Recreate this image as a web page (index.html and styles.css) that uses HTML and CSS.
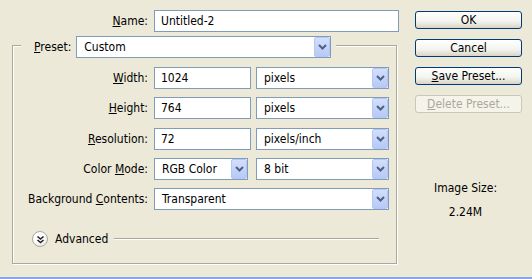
FILE: index.html
```html
<!DOCTYPE html>
<html lang="en">

<head>
    <title>New</title>
    <link rel="stylesheet" href="styles.css">
</head>

<body>
    <div class="dialog">
        <div class="form">
            <div class="row name-row">
                <label class="lbl"><u>N</u>ame:</label>
                <div class="field name-field">Untitled-2</div>
            </div>

            <fieldset class="group">
                <legend class="preset">
                    <label class="preset-lbl"><u>P</u>reset:</label>
                    <div class="combo preset-combo">
                        <span class="val">Custom</span>
                        <span class="arrow"><svg width="9" height="6" viewBox="0 0 9 6"><path d="M1 1 L4.5 4.5 L8 1" fill="none" stroke="#4d6185" stroke-width="2"/></svg></span>
                    </div>
                </legend>

                <div class="rows">
                    <div class="row">
                        <label class="lbl"><u>W</u>idth:</label>
                        <div class="field num">1024</div>
                        <div class="combo unit">
                            <span class="val">pixels</span>
                            <span class="arrow"><svg width="9" height="6" viewBox="0 0 9 6"><path d="M1 1 L4.5 4.5 L8 1" fill="none" stroke="#4d6185" stroke-width="2"/></svg></span>
                        </div>
                    </div>
                    <div class="row">
                        <label class="lbl"><u>H</u>eight:</label>
                        <div class="field num">764</div>
                        <div class="combo unit">
                            <span class="val">pixels</span>
                            <span class="arrow"><svg width="9" height="6" viewBox="0 0 9 6"><path d="M1 1 L4.5 4.5 L8 1" fill="none" stroke="#4d6185" stroke-width="2"/></svg></span>
                        </div>
                    </div>
                    <div class="row">
                        <label class="lbl"><u>R</u>esolution:</label>
                        <div class="field num">72</div>
                        <div class="combo unit">
                            <span class="val">pixels/inch</span>
                            <span class="arrow"><svg width="9" height="6" viewBox="0 0 9 6"><path d="M1 1 L4.5 4.5 L8 1" fill="none" stroke="#4d6185" stroke-width="2"/></svg></span>
                        </div>
                    </div>
                    <div class="row">
                        <label class="lbl">Color <u>M</u>ode:</label>
                        <div class="combo mode">
                            <span class="val">RGB Color</span>
                            <span class="arrow"><svg width="9" height="6" viewBox="0 0 9 6"><path d="M1 1 L4.5 4.5 L8 1" fill="none" stroke="#4d6185" stroke-width="2"/></svg></span>
                        </div>
                        <div class="combo unit bits">
                            <span class="val">8 bit</span>
                            <span class="arrow"><svg width="9" height="6" viewBox="0 0 9 6"><path d="M1 1 L4.5 4.5 L8 1" fill="none" stroke="#4d6185" stroke-width="2"/></svg></span>
                        </div>
                    </div>
                    <div class="row">
                        <label class="lbl">Background <u>C</u>ontents:</label>
                        <div class="combo wide">
                            <span class="val">Transparent</span>
                            <span class="arrow"><svg width="9" height="6" viewBox="0 0 9 6"><path d="M1 1 L4.5 4.5 L8 1" fill="none" stroke="#4d6185" stroke-width="2"/></svg></span>
                        </div>
                    </div>
                </div>

                <div class="advanced">
                    <span class="adv-btn"><svg width="9" height="9" viewBox="0 0 9 9"><path d="M1.5 1.5 L4.5 4 L7.5 1.5 M1.5 5 L4.5 7.5 L7.5 5" fill="none" stroke="#222" stroke-width="1.6"/></svg></span>
                    <span class="adv-text">Advanced</span>
                    <span class="adv-line"></span>
                </div>
            </fieldset>
        </div>

        <div class="side">
            <button class="btn">OK</button>
            <button class="btn">Cancel</button>
            <button class="btn"><u>S</u>ave Preset...</button>
            <button class="btn" disabled><u>D</u>elete Preset...</button>

            <div class="info">
                <div>Image Size:</div>
                <div class="size">2.24M</div>
            </div>
        </div>
    </div>
</body>

</html>
```

FILE: styles.css
```css
body {
    margin: 0;
    background: #ece9d8;
    font-family: "DejaVu Sans Condensed", "DejaVu Sans", sans-serif;
    font-stretch: condensed;
    font-size: 12px;
    color: #000;
}

.dialog {
    display: flex;
    height: 277px;
    border-bottom: 2px solid #8aa6e6;
}

.form {
    width: 415px;
}

.row {
    display: flex;
    align-items: center;
    height: 22px;
}

.lbl {
    width: 135px;
    text-align: right;
    margin-right: 6px;
    white-space: nowrap;
}

.name-row {
    margin-top: 10px;
}

.name-row .lbl {
    width: 148px;
}

.field, .combo {
    box-sizing: border-box;
    height: 22px;
    border: 1px solid #7f9db9;
    background: #fff;
    display: flex;
    align-items: center;
    padding-left: 6px;
}

.name-field {
    width: 245px;
}

.num {
    width: 97px;
    margin-right: 5px;
}

.combo {
    justify-content: space-between;
    padding-left: 7px;
}

.arrow {
    box-sizing: border-box;
    width: 16px;
    height: 20px;
    border: 1px solid #b4c7f5;
    border-radius: 2px;
    background: linear-gradient(#d2defc, #b6c9f6);
    display: flex;
    align-items: center;
    justify-content: center;
}

.unit {
    width: 133px;
}

.mode {
    width: 94px;
    margin-right: 8px;
}

.wide {
    width: 235px;
}

.group {
    box-sizing: border-box;
    width: 385px;
    margin: 0 0 0 12px;
    padding: 0 0 16px 0;
    border: 1px solid #aca899;
    box-shadow: 1px 1px 0 #fff, inset 1px 1px 0 #fff;
}

.preset {
    display: flex;
    align-items: center;
    margin-left: 8px;
    padding: 4px 5px 0 13px;
    background: #ece9d8;
}

.preset-lbl {
    margin-right: 5px;
}

.preset-combo {
    width: 255px;
}

.rows {
    display: flex;
    flex-direction: column;
    gap: 8.25px;
    margin-top: 9px;
}

.advanced {
    display: flex;
    align-items: center;
    margin-top: 21px;
    padding-left: 19px;
}

.adv-btn {
    box-sizing: border-box;
    width: 16px;
    height: 16px;
    border: 1px solid #a9a9a0;
    border-radius: 50%;
    background: radial-gradient(circle at 40% 35%, #fff 40%, #dcdad0);
    display: flex;
    align-items: center;
    justify-content: center;
}

.adv-text {
    margin-left: 7px;
}

.adv-line {
    flex: 1;
    height: 1px;
    background: #aca899;
    border-bottom: 1px solid #fff;
    margin: 0 17px 0 6px;
}

.side {
    width: 107px;
    display: flex;
    flex-direction: column;
    padding-top: 11px;
}

.btn {
    box-sizing: border-box;
    height: 18px;
    margin-bottom: 10px;
    padding: 0;
    border: 1px solid #003c74;
    border-radius: 3px;
    background: linear-gradient(#fff, #f3f3ee 60%, #d8d4c6);
    font: inherit;
    color: #000;
}

.btn:disabled {
    border-color: #c9c7ba;
    background: #f5f4ea;
    color: #aca899;
}

.info {
    text-align: center;
    margin-top: 58px;
    padding-right: 6px;
}

.size {
    margin-top: 10px;
}
```
